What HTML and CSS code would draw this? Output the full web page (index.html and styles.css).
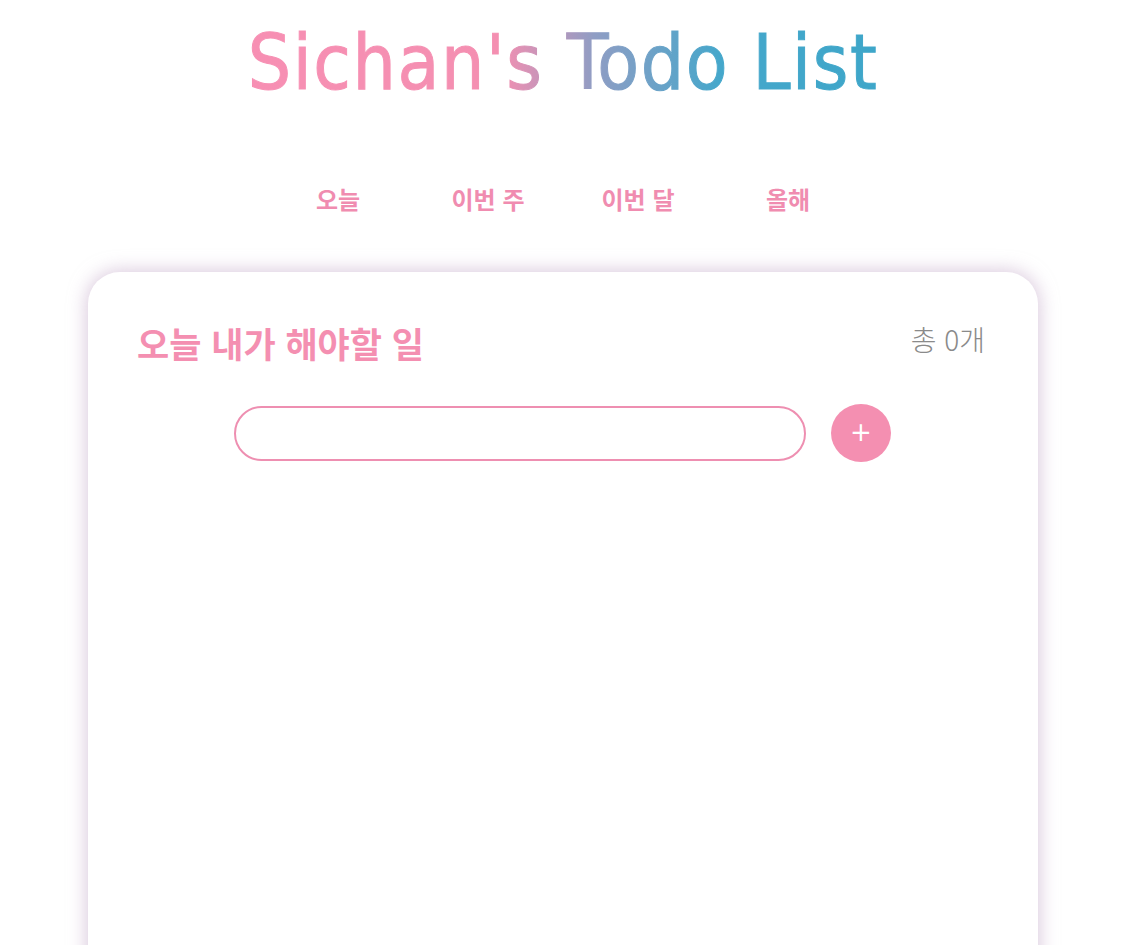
FILE: index.html
```html
<!DOCTYPE html>
<html lang="ko">
<head>
<meta charset="utf-8">
<title>Sichan's Todo List</title>
<link rel="stylesheet" href="styles.css">
</head>
<body>
<div class="page">
  <h1 class="title">Sichan's Todo List</h1>
  <nav class="nav">
    <a class="nav-item">오늘</a>
    <a class="nav-item">이번 주</a>
    <a class="nav-item">이번 달</a>
    <a class="nav-item">올해</a>
  </nav>
  <section class="card">
    <div class="card-head">
      <h2 class="card-title">오늘 내가 해야할 일</h2>
      <span class="count">총 0개</span>
    </div>
    <form class="add-form">
      <input class="add-input" type="text">
      <button class="add-btn" type="button">+</button>
    </form>
  </section>
</div>
</body>
</html>
```
FILE: styles.css
```css
html, body {
  margin: 0;
  padding: 0;
  background: #fff;
  overflow: hidden;
}
body {
  font-family: "Noto Sans CJK KR", "Noto Sans", sans-serif;
}
.page {
  width: 1126px;
  display: flex;
  flex-direction: column;
  align-items: center;
}
.title {
  margin: 15px 0 0;
  font-family: "DejaVu Sans", sans-serif;
  font-stretch: condensed;
  font-weight: normal;
  font-size: 76px;
  line-height: 96px;
  letter-spacing: 1.6px;
  -webkit-text-stroke: 1px currentColor;
  background: linear-gradient(90deg, #f78fb3 0%, #f48fb1 40%, #8f9dc4 55%, #45a7cb 75%, #3ea6c9 100%);
  -webkit-background-clip: text;
  background-clip: text;
  color: transparent;
}
.nav {
  display: flex;
  margin-top: 71px;
}
.nav-item {
  width: 150px;
  text-align: center;
  font-size: 24px;
  font-weight: 700;
  line-height: 34px;
  color: #f08cb0;
}
.card {
  margin-top: 56px;
  width: 950px;
  min-height: 720px;
  box-sizing: border-box;
  background: #fff;
  border-radius: 32px;
  box-shadow: 0 0 18px 2px rgba(190, 160, 195, 0.55);
  padding: 46px 53px 0 49px;
}
.card-head {
  display: flex;
  justify-content: space-between;
  align-items: center;
}
.card-title {
  margin: 0;
  font-size: 35px;
  font-weight: 700;
  line-height: 50px;
  color: #f48fb1;
}
.count {
  font-size: 28px;
  font-weight: 300;
  color: #8a8a8a;
  margin-top: -8px;
}
.add-form {
  display: flex;
  align-items: center;
  margin: 36px 0 0 97px;
}
.add-input {
  width: 572px;
  height: 55px;
  box-sizing: border-box;
  border: 2px solid #ee8fb1;
  border-radius: 28px;
  outline: none;
  padding: 0 20px;
  background: #fff;
}
.add-btn {
  margin-left: 25px;
  width: 60px;
  height: 58px;
  border-radius: 50%;
  border: none;
  background: #f48fb1;
  color: #fff;
  font-family: "DejaVu Sans", sans-serif;
  font-size: 26px;
  line-height: 1;
  padding: 0 0 2px;
}
```
